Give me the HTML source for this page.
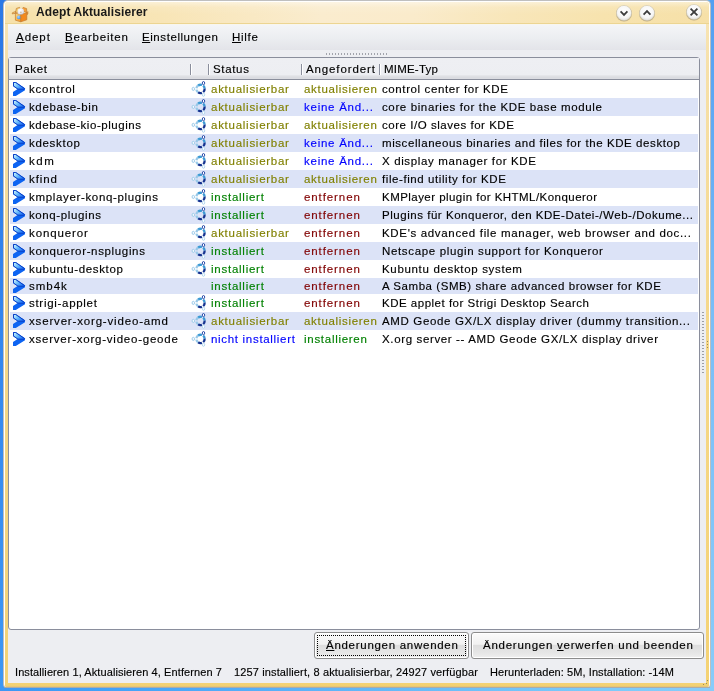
<!DOCTYPE html><html><head><meta charset="utf-8"><style>
*{margin:0;padding:0;box-sizing:border-box}
html,body{width:714px;height:691px;overflow:hidden}
body{position:relative;background:linear-gradient(90deg,#2f7fe8 0%,#4a9cf2 40%,#5eaef7 100%);font-family:"Liberation Sans",sans-serif}
.a{position:absolute}
.t{position:absolute;white-space:pre;font-family:"Liberation Sans",sans-serif;-webkit-font-smoothing:antialiased;will-change:transform;-webkit-text-stroke:0.15px currentColor}
.ic{position:absolute}
u{text-decoration:underline;text-underline-offset:1px}
</style></head><body>

<div class="a" style="left:0;top:0;width:4px;height:691px;background:linear-gradient(180deg,#2b78e6 0%,#3385ee 45%,#3d97f4 100%)"></div>
<div class="a" style="left:710px;top:0;width:4px;height:691px;background:linear-gradient(180deg,#539ff2 0%,#6ab2f6 30%,#7abef8 45%,#88ccfa 100%)"></div>
<div class="a" style="left:0;top:686px;width:714px;height:5px;background:linear-gradient(90deg,#3d97f4 0%,#42a2f8 15%,#5eb4f8 45%,#7ccbfa 85%,#88ccfa 100%)"></div>
<div class="a" style="left:7px;top:0;width:700px;height:1px;background:#cdcdcd"></div>
<div class="a" style="left:3px;top:0px;width:708px;height:688px;border-radius:5px 5px 4px 4px;background:#bfbfbf"></div>
<div class="a" style="left:4px;top:1px;width:706px;height:686px;border-radius:4px 4px 3px 3px;background:#fff"></div>
<div class="a" style="left:5px;top:2px;width:704px;height:685px;border-radius:3px 3px 2px 2px;background:linear-gradient(180deg,#f8e6b8 0%,#f6e0a8 10%,#f5d88a 45%,#f4d274 100%)"></div>
<div class="a" style="left:5px;top:683px;width:704px;height:4px;border-radius:0 0 2px 2px;background:linear-gradient(180deg,#f4d274 0%,#f3d172 60%,#e0c27a 100%)"></div>
<div class="a" style="left:4px;top:687px;width:706px;height:1px;background:#a8a49a;opacity:0.7"></div>
<div class="a" style="left:5px;top:2px;width:704px;height:21px;border-radius:3px 3px 0 0;background:linear-gradient(180deg,rgba(255,255,255,0.45) 0%,rgba(255,255,255,0.1) 25%,rgba(255,255,255,0) 60%),linear-gradient(90deg,#f6e1aa 0%,#f8e5b6 22%,#faecce 45%,#faebcb 58%,#f8e6b9 72%,#f7e3ae 85%,#f6e0a8 100%)"></div>
<div class="a" style="left:5px;top:23px;width:704px;height:1px;background:#ecd592"></div>
<div class="a" style="left:8px;top:24px;width:698px;height:1px;background:#f8f6ee"></div>
<div class="a" style="left:8px;top:25px;width:698px;height:658px;background:#edeef2"></div>
<div class="a" style="left:8px;top:25px;width:698px;height:25px;background:linear-gradient(180deg,#f4f5f7 0%,#eceef1 50%,#e3e4e9 100%)"></div>
<svg class="ic" style="left:11px;top:5px" width="18" height="18" viewBox="0 0 18 18"><defs><linearGradient id="lf" x1="0" y1="0" x2="0.6" y2="1"><stop offset="0" stop-color="#f8dc88"/><stop offset="1" stop-color="#f6a234"/></linearGradient><radialGradient id="sp" cx="40%" cy="35%" r="70%"><stop offset="0" stop-color="#ffffff"/><stop offset="0.7" stop-color="#e6e6ee"/><stop offset="1" stop-color="#b8b8c4"/></radialGradient><radialGradient id="bs" cx="40%" cy="35%" r="70%"><stop offset="0" stop-color="#a8d4ff"/><stop offset="1" stop-color="#3d8ee6"/></radialGradient></defs><g stroke="#c27a30" stroke-width="0.7" stroke-linejoin="round"><path d="M4.4 8.3 L1.2 8.9 L1.6 7.6 L5.2 6.3 Z" fill="#f3d27a"/><path d="M4.4 8.3 L5.4 3.4 L8.6 2.4 L9.6 5.6 Z" fill="#f5d070"/><path d="M10 5 L12.2 2.4 L15.6 3.6 L15.8 7.6 Z" fill="#f6a03a"/><path d="M15.8 7.6 L16.8 6.6 L16.9 8.9 L15.8 9.8 Z" fill="#f0a040"/><path d="M4.4 8.3 L9.8 9.4 L9.8 16.8 L4.4 15.2 Z" fill="url(#lf)"/><path d="M9.8 9.4 L15.8 7.6 L15.8 14.8 L9.8 16.8 Z" fill="#f38a1e"/></g><circle cx="9.8" cy="6.4" r="3.2" fill="url(#sp)"/><circle cx="9.9" cy="7.4" r="0.8" fill="#c8b8a0"/><circle cx="7.7" cy="12.4" r="1.8" fill="url(#bs)"/></svg>
<div class="t" style="left:36px;top:5px;line-height:15px;font-size:12px;font-weight:bold;color:#1a1a1a;letter-spacing:0.1px;-webkit-text-stroke:0">Adept Aktualisierer</div>
<svg class="ic" style="left:614.5px;top:3.5999999999999996px" width="18" height="18" viewBox="0 0 18 18"><defs><radialGradient id="g623" cx="50%" cy="40%" r="60%"><stop offset="0" stop-color="#ffffff"/><stop offset="0.7" stop-color="#f6f6f6"/><stop offset="1" stop-color="#dedcd6"/></radialGradient></defs><circle cx="9" cy="9.7" r="7.9" fill="#8a7a58" opacity="0.5"/><circle cx="9" cy="9" r="7.6" fill="url(#g623)" stroke="#cbc4b0" stroke-width="0.5"/><path d="M5.6 7.4 L9 10.9 L12.4 7.4" stroke="#3c3c3c" stroke-width="1.8" fill="none"/></svg>
<svg class="ic" style="left:637.5px;top:3.5999999999999996px" width="18" height="18" viewBox="0 0 18 18"><defs><radialGradient id="g646" cx="50%" cy="40%" r="60%"><stop offset="0" stop-color="#ffffff"/><stop offset="0.7" stop-color="#f6f6f6"/><stop offset="1" stop-color="#dedcd6"/></radialGradient></defs><circle cx="9" cy="9.7" r="7.9" fill="#8a7a58" opacity="0.5"/><circle cx="9" cy="9" r="7.6" fill="url(#g646)" stroke="#cbc4b0" stroke-width="0.5"/><path d="M5.6 10.6 L9 7.1 L12.4 10.6" stroke="#3c3c3c" stroke-width="1.8" fill="none"/></svg>
<svg class="ic" style="left:684.5px;top:3.3000000000000007px" width="18" height="18" viewBox="0 0 18 18"><defs><radialGradient id="g693" cx="50%" cy="40%" r="60%"><stop offset="0" stop-color="#ffffff"/><stop offset="0.7" stop-color="#f6f6f6"/><stop offset="1" stop-color="#dedcd6"/></radialGradient></defs><circle cx="9" cy="9.7" r="7.9" fill="#8a7a58" opacity="0.5"/><circle cx="9" cy="9" r="7.6" fill="url(#g693)" stroke="#cbc4b0" stroke-width="0.5"/><path d="M5.6 5.6 L12.4 12.4 M12.4 5.6 L5.6 12.4" stroke="#3c3c3c" stroke-width="1.8" fill="none"/></svg>
<div class="t" style="left:16px;top:28.52px;line-height:17px;font-size:11.5px;letter-spacing:0.956px;color:#000;"><u>A</u>dept</div>
<div class="t" style="left:65px;top:28.52px;line-height:17px;font-size:11.5px;letter-spacing:0.804px;color:#000;"><u>B</u>earbeiten</div>
<div class="t" style="left:142px;top:28.52px;line-height:17px;font-size:11.5px;letter-spacing:0.567px;color:#000;"><u>E</u>instellungen</div>
<div class="t" style="left:232px;top:28.52px;line-height:17px;font-size:11.5px;letter-spacing:0.712px;color:#000;"><u>H</u>ilfe</div>
<div class="a" style="left:326px;top:53px;width:62px;height:2px;background:repeating-linear-gradient(90deg,#a2a4ac 0 1px,transparent 1px 3px)"></div>
<div class="a" style="left:8px;top:57px;width:692px;height:573px;border:1px solid #8a8e9c;border-radius:3px;background:#fff"></div>
<div class="a" style="left:9px;top:58px;width:690px;height:21px;background:linear-gradient(180deg,#eeeff3 0%,#edeef2 80.9%,#e5e6ea 81%,#e5e6ea 85.7%,#dfe0e4 85.8%,#dfe0e4 90.4%,#dbdce1 90.5%,#dbdce1 100%)"></div>
<div class="a" style="left:9px;top:79px;width:690px;height:1px;background:#8a8e9c"></div>
<div class="a" style="left:190px;top:64px;width:1px;height:11px;background:#8a8e9c"></div>
<div class="a" style="left:191px;top:64px;width:1px;height:11px;background:#fff"></div>
<div class="a" style="left:208px;top:64px;width:1px;height:11px;background:#8a8e9c"></div>
<div class="a" style="left:209px;top:64px;width:1px;height:11px;background:#fff"></div>
<div class="a" style="left:301px;top:64px;width:1px;height:11px;background:#8a8e9c"></div>
<div class="a" style="left:302px;top:64px;width:1px;height:11px;background:#fff"></div>
<div class="a" style="left:379px;top:64px;width:1px;height:11px;background:#8a8e9c"></div>
<div class="a" style="left:380px;top:64px;width:1px;height:11px;background:#fff"></div>
<div class="t" style="left:15px;top:60.52px;line-height:17px;font-size:11.5px;letter-spacing:0.617px;color:#000;">Paket</div>
<div class="t" style="left:213px;top:60.52px;line-height:17px;font-size:11.5px;letter-spacing:0.660px;color:#000;">Status</div>
<div class="t" style="left:306px;top:60.52px;line-height:17px;font-size:11.5px;letter-spacing:0.879px;color:#000;">Angefordert</div>
<div class="t" style="left:384px;top:60.52px;line-height:17px;font-size:11.5px;letter-spacing:0.210px;color:#000;">MIME-Typ</div>
<svg class="ic" style="left:13px;top:82px" width="13" height="15" viewBox="0 0 13 15"><defs><linearGradient id="ag" x1="0" y1="0" x2="1" y2="0.6"><stop offset="0" stop-color="#d6fdff"/><stop offset="0.55" stop-color="#5fb4fb"/><stop offset="1" stop-color="#1c6ff4"/></linearGradient></defs><path d="M0 0 L2.8 0 L12 6.3 L12 8.2 L2.8 14 L0 14 L0 10 L4.6 7.1 L0 4.2 Z" fill="#0d64f2"/><path d="M0.5 0.5 L2.7 0.5 L11.6 6.6 L11 7.3 L4.9 7.1 L0.5 4.0 Z" fill="url(#ag)" stroke="#0b3ec4" stroke-width="1" stroke-linejoin="miter"/></svg>
<svg class="ic" style="left:191px;top:81px" width="16" height="16" viewBox="0 0 16 16"><path d="M5.41 7.18 A4.15 4.15 0 0 1 7.12 4.50" stroke="#98c8e8" stroke-width="2.3" fill="none"/><path d="M7.12 4.50 A4.15 4.15 0 0 1 11.05 4.05" stroke="#3c9ad4" stroke-width="2.3" fill="none"/><path d="M12.17 4.72 A4.15 4.15 0 0 1 13.63 7.54" stroke="#3c9ad4" stroke-width="2.3" fill="none"/><path d="M13.63 7.54 A4.15 4.15 0 0 1 12.17 11.08" stroke="#15328f" stroke-width="2.3" fill="none"/><path d="M10.92 11.80 A4.15 4.15 0 0 1 7.12 11.30" stroke="#15328f" stroke-width="2.3" fill="none"/><path d="M7.12 11.30 A4.15 4.15 0 0 1 5.41 8.62" stroke="#98c8e8" stroke-width="2.3" fill="none"/><ellipse cx="12.5" cy="2.1" rx="1.2" ry="1.6" fill="#ffffff" stroke="#2a4aa8" stroke-width="1.0"/><ellipse cx="2.3" cy="7.9" rx="1.2" ry="1.6" fill="#ffffff" stroke="#9ccbea" stroke-width="1.0"/><ellipse cx="12.5" cy="13.7" rx="1.2" ry="1.6" fill="#ffffff" stroke="#b2d6ee" stroke-width="1.0"/></svg>
<div class="t" style="left:29px;top:80.52px;line-height:17px;font-size:11.5px;letter-spacing:0.809px;color:#000;">kcontrol</div>
<div class="t" style="left:211px;top:80.52px;line-height:17px;font-size:11.5px;letter-spacing:0.734px;color:#808000;">aktualisierbar</div>
<div class="t" style="left:304px;top:80.52px;line-height:17px;font-size:11.5px;letter-spacing:0.691px;color:#808000;">aktualisieren</div>
<div class="t" style="left:382px;top:80.52px;line-height:17px;font-size:11.5px;letter-spacing:0.607px;color:#000;">control center for KDE</div>
<div class="a" style="left:10px;top:98px;width:688px;height:18px;background:#dce3f7"></div>
<svg class="ic" style="left:13px;top:100px" width="13" height="15" viewBox="0 0 13 15"><defs><linearGradient id="ag" x1="0" y1="0" x2="1" y2="0.6"><stop offset="0" stop-color="#d6fdff"/><stop offset="0.55" stop-color="#5fb4fb"/><stop offset="1" stop-color="#1c6ff4"/></linearGradient></defs><path d="M0 0 L2.8 0 L12 6.3 L12 8.2 L2.8 14 L0 14 L0 10 L4.6 7.1 L0 4.2 Z" fill="#0d64f2"/><path d="M0.5 0.5 L2.7 0.5 L11.6 6.6 L11 7.3 L4.9 7.1 L0.5 4.0 Z" fill="url(#ag)" stroke="#0b3ec4" stroke-width="1" stroke-linejoin="miter"/></svg>
<svg class="ic" style="left:191px;top:99px" width="16" height="16" viewBox="0 0 16 16"><path d="M5.41 7.18 A4.15 4.15 0 0 1 7.12 4.50" stroke="#98c8e8" stroke-width="2.3" fill="none"/><path d="M7.12 4.50 A4.15 4.15 0 0 1 11.05 4.05" stroke="#3c9ad4" stroke-width="2.3" fill="none"/><path d="M12.17 4.72 A4.15 4.15 0 0 1 13.63 7.54" stroke="#3c9ad4" stroke-width="2.3" fill="none"/><path d="M13.63 7.54 A4.15 4.15 0 0 1 12.17 11.08" stroke="#15328f" stroke-width="2.3" fill="none"/><path d="M10.92 11.80 A4.15 4.15 0 0 1 7.12 11.30" stroke="#15328f" stroke-width="2.3" fill="none"/><path d="M7.12 11.30 A4.15 4.15 0 0 1 5.41 8.62" stroke="#98c8e8" stroke-width="2.3" fill="none"/><ellipse cx="12.5" cy="2.1" rx="1.2" ry="1.6" fill="#ffffff" stroke="#2a4aa8" stroke-width="1.0"/><ellipse cx="2.3" cy="7.9" rx="1.2" ry="1.6" fill="#ffffff" stroke="#9ccbea" stroke-width="1.0"/><ellipse cx="12.5" cy="13.7" rx="1.2" ry="1.6" fill="#ffffff" stroke="#b2d6ee" stroke-width="1.0"/></svg>
<div class="t" style="left:29px;top:98.52px;line-height:17px;font-size:11.5px;letter-spacing:0.621px;color:#000;">kdebase-bin</div>
<div class="t" style="left:211px;top:98.52px;line-height:17px;font-size:11.5px;letter-spacing:0.734px;color:#808000;">aktualisierbar</div>
<div class="t" style="left:304px;top:98.52px;line-height:17px;font-size:11.5px;letter-spacing:0.740px;color:#0000ff;">keine Änd...</div>
<div class="t" style="left:382px;top:98.52px;line-height:17px;font-size:11.5px;letter-spacing:0.621px;color:#000;">core binaries for the KDE base module</div>
<svg class="ic" style="left:13px;top:118px" width="13" height="15" viewBox="0 0 13 15"><defs><linearGradient id="ag" x1="0" y1="0" x2="1" y2="0.6"><stop offset="0" stop-color="#d6fdff"/><stop offset="0.55" stop-color="#5fb4fb"/><stop offset="1" stop-color="#1c6ff4"/></linearGradient></defs><path d="M0 0 L2.8 0 L12 6.3 L12 8.2 L2.8 14 L0 14 L0 10 L4.6 7.1 L0 4.2 Z" fill="#0d64f2"/><path d="M0.5 0.5 L2.7 0.5 L11.6 6.6 L11 7.3 L4.9 7.1 L0.5 4.0 Z" fill="url(#ag)" stroke="#0b3ec4" stroke-width="1" stroke-linejoin="miter"/></svg>
<svg class="ic" style="left:191px;top:117px" width="16" height="16" viewBox="0 0 16 16"><path d="M5.41 7.18 A4.15 4.15 0 0 1 7.12 4.50" stroke="#98c8e8" stroke-width="2.3" fill="none"/><path d="M7.12 4.50 A4.15 4.15 0 0 1 11.05 4.05" stroke="#3c9ad4" stroke-width="2.3" fill="none"/><path d="M12.17 4.72 A4.15 4.15 0 0 1 13.63 7.54" stroke="#3c9ad4" stroke-width="2.3" fill="none"/><path d="M13.63 7.54 A4.15 4.15 0 0 1 12.17 11.08" stroke="#15328f" stroke-width="2.3" fill="none"/><path d="M10.92 11.80 A4.15 4.15 0 0 1 7.12 11.30" stroke="#15328f" stroke-width="2.3" fill="none"/><path d="M7.12 11.30 A4.15 4.15 0 0 1 5.41 8.62" stroke="#98c8e8" stroke-width="2.3" fill="none"/><ellipse cx="12.5" cy="2.1" rx="1.2" ry="1.6" fill="#ffffff" stroke="#2a4aa8" stroke-width="1.0"/><ellipse cx="2.3" cy="7.9" rx="1.2" ry="1.6" fill="#ffffff" stroke="#9ccbea" stroke-width="1.0"/><ellipse cx="12.5" cy="13.7" rx="1.2" ry="1.6" fill="#ffffff" stroke="#b2d6ee" stroke-width="1.0"/></svg>
<div class="t" style="left:29px;top:116.52px;line-height:17px;font-size:11.5px;letter-spacing:0.535px;color:#000;">kdebase-kio-plugins</div>
<div class="t" style="left:211px;top:116.52px;line-height:17px;font-size:11.5px;letter-spacing:0.734px;color:#808000;">aktualisierbar</div>
<div class="t" style="left:304px;top:116.52px;line-height:17px;font-size:11.5px;letter-spacing:0.691px;color:#808000;">aktualisieren</div>
<div class="t" style="left:382px;top:116.52px;line-height:17px;font-size:11.5px;letter-spacing:0.533px;color:#000;">core I/O slaves for KDE</div>
<div class="a" style="left:10px;top:134px;width:688px;height:18px;background:#dce3f7"></div>
<svg class="ic" style="left:13px;top:136px" width="13" height="15" viewBox="0 0 13 15"><defs><linearGradient id="ag" x1="0" y1="0" x2="1" y2="0.6"><stop offset="0" stop-color="#d6fdff"/><stop offset="0.55" stop-color="#5fb4fb"/><stop offset="1" stop-color="#1c6ff4"/></linearGradient></defs><path d="M0 0 L2.8 0 L12 6.3 L12 8.2 L2.8 14 L0 14 L0 10 L4.6 7.1 L0 4.2 Z" fill="#0d64f2"/><path d="M0.5 0.5 L2.7 0.5 L11.6 6.6 L11 7.3 L4.9 7.1 L0.5 4.0 Z" fill="url(#ag)" stroke="#0b3ec4" stroke-width="1" stroke-linejoin="miter"/></svg>
<svg class="ic" style="left:191px;top:135px" width="16" height="16" viewBox="0 0 16 16"><path d="M5.41 7.18 A4.15 4.15 0 0 1 7.12 4.50" stroke="#98c8e8" stroke-width="2.3" fill="none"/><path d="M7.12 4.50 A4.15 4.15 0 0 1 11.05 4.05" stroke="#3c9ad4" stroke-width="2.3" fill="none"/><path d="M12.17 4.72 A4.15 4.15 0 0 1 13.63 7.54" stroke="#3c9ad4" stroke-width="2.3" fill="none"/><path d="M13.63 7.54 A4.15 4.15 0 0 1 12.17 11.08" stroke="#15328f" stroke-width="2.3" fill="none"/><path d="M10.92 11.80 A4.15 4.15 0 0 1 7.12 11.30" stroke="#15328f" stroke-width="2.3" fill="none"/><path d="M7.12 11.30 A4.15 4.15 0 0 1 5.41 8.62" stroke="#98c8e8" stroke-width="2.3" fill="none"/><ellipse cx="12.5" cy="2.1" rx="1.2" ry="1.6" fill="#ffffff" stroke="#2a4aa8" stroke-width="1.0"/><ellipse cx="2.3" cy="7.9" rx="1.2" ry="1.6" fill="#ffffff" stroke="#9ccbea" stroke-width="1.0"/><ellipse cx="12.5" cy="13.7" rx="1.2" ry="1.6" fill="#ffffff" stroke="#b2d6ee" stroke-width="1.0"/></svg>
<div class="t" style="left:29px;top:134.52px;line-height:17px;font-size:11.5px;letter-spacing:0.690px;color:#000;">kdesktop</div>
<div class="t" style="left:211px;top:134.52px;line-height:17px;font-size:11.5px;letter-spacing:0.734px;color:#808000;">aktualisierbar</div>
<div class="t" style="left:304px;top:134.52px;line-height:17px;font-size:11.5px;letter-spacing:0.740px;color:#0000ff;">keine Änd...</div>
<div class="t" style="left:382px;top:134.52px;line-height:17px;font-size:11.5px;letter-spacing:0.576px;color:#000;">miscellaneous binaries and files for the KDE desktop</div>
<svg class="ic" style="left:13px;top:154px" width="13" height="15" viewBox="0 0 13 15"><defs><linearGradient id="ag" x1="0" y1="0" x2="1" y2="0.6"><stop offset="0" stop-color="#d6fdff"/><stop offset="0.55" stop-color="#5fb4fb"/><stop offset="1" stop-color="#1c6ff4"/></linearGradient></defs><path d="M0 0 L2.8 0 L12 6.3 L12 8.2 L2.8 14 L0 14 L0 10 L4.6 7.1 L0 4.2 Z" fill="#0d64f2"/><path d="M0.5 0.5 L2.7 0.5 L11.6 6.6 L11 7.3 L4.9 7.1 L0.5 4.0 Z" fill="url(#ag)" stroke="#0b3ec4" stroke-width="1" stroke-linejoin="miter"/></svg>
<svg class="ic" style="left:191px;top:153px" width="16" height="16" viewBox="0 0 16 16"><path d="M5.41 7.18 A4.15 4.15 0 0 1 7.12 4.50" stroke="#98c8e8" stroke-width="2.3" fill="none"/><path d="M7.12 4.50 A4.15 4.15 0 0 1 11.05 4.05" stroke="#3c9ad4" stroke-width="2.3" fill="none"/><path d="M12.17 4.72 A4.15 4.15 0 0 1 13.63 7.54" stroke="#3c9ad4" stroke-width="2.3" fill="none"/><path d="M13.63 7.54 A4.15 4.15 0 0 1 12.17 11.08" stroke="#15328f" stroke-width="2.3" fill="none"/><path d="M10.92 11.80 A4.15 4.15 0 0 1 7.12 11.30" stroke="#15328f" stroke-width="2.3" fill="none"/><path d="M7.12 11.30 A4.15 4.15 0 0 1 5.41 8.62" stroke="#98c8e8" stroke-width="2.3" fill="none"/><ellipse cx="12.5" cy="2.1" rx="1.2" ry="1.6" fill="#ffffff" stroke="#2a4aa8" stroke-width="1.0"/><ellipse cx="2.3" cy="7.9" rx="1.2" ry="1.6" fill="#ffffff" stroke="#9ccbea" stroke-width="1.0"/><ellipse cx="12.5" cy="13.7" rx="1.2" ry="1.6" fill="#ffffff" stroke="#b2d6ee" stroke-width="1.0"/></svg>
<div class="t" style="left:29px;top:152.52px;line-height:17px;font-size:11.5px;letter-spacing:1.605px;color:#000;">kdm</div>
<div class="t" style="left:211px;top:152.52px;line-height:17px;font-size:11.5px;letter-spacing:0.734px;color:#808000;">aktualisierbar</div>
<div class="t" style="left:304px;top:152.52px;line-height:17px;font-size:11.5px;letter-spacing:0.740px;color:#0000ff;">keine Änd...</div>
<div class="t" style="left:382px;top:152.52px;line-height:17px;font-size:11.5px;letter-spacing:0.632px;color:#000;">X display manager for KDE</div>
<div class="a" style="left:10px;top:170px;width:688px;height:18px;background:#dce3f7"></div>
<svg class="ic" style="left:13px;top:172px" width="13" height="15" viewBox="0 0 13 15"><defs><linearGradient id="ag" x1="0" y1="0" x2="1" y2="0.6"><stop offset="0" stop-color="#d6fdff"/><stop offset="0.55" stop-color="#5fb4fb"/><stop offset="1" stop-color="#1c6ff4"/></linearGradient></defs><path d="M0 0 L2.8 0 L12 6.3 L12 8.2 L2.8 14 L0 14 L0 10 L4.6 7.1 L0 4.2 Z" fill="#0d64f2"/><path d="M0.5 0.5 L2.7 0.5 L11.6 6.6 L11 7.3 L4.9 7.1 L0.5 4.0 Z" fill="url(#ag)" stroke="#0b3ec4" stroke-width="1" stroke-linejoin="miter"/></svg>
<svg class="ic" style="left:191px;top:171px" width="16" height="16" viewBox="0 0 16 16"><path d="M5.41 7.18 A4.15 4.15 0 0 1 7.12 4.50" stroke="#98c8e8" stroke-width="2.3" fill="none"/><path d="M7.12 4.50 A4.15 4.15 0 0 1 11.05 4.05" stroke="#3c9ad4" stroke-width="2.3" fill="none"/><path d="M12.17 4.72 A4.15 4.15 0 0 1 13.63 7.54" stroke="#3c9ad4" stroke-width="2.3" fill="none"/><path d="M13.63 7.54 A4.15 4.15 0 0 1 12.17 11.08" stroke="#15328f" stroke-width="2.3" fill="none"/><path d="M10.92 11.80 A4.15 4.15 0 0 1 7.12 11.30" stroke="#15328f" stroke-width="2.3" fill="none"/><path d="M7.12 11.30 A4.15 4.15 0 0 1 5.41 8.62" stroke="#98c8e8" stroke-width="2.3" fill="none"/><ellipse cx="12.5" cy="2.1" rx="1.2" ry="1.6" fill="#ffffff" stroke="#2a4aa8" stroke-width="1.0"/><ellipse cx="2.3" cy="7.9" rx="1.2" ry="1.6" fill="#ffffff" stroke="#9ccbea" stroke-width="1.0"/><ellipse cx="12.5" cy="13.7" rx="1.2" ry="1.6" fill="#ffffff" stroke="#b2d6ee" stroke-width="1.0"/></svg>
<div class="t" style="left:29px;top:170.52px;line-height:17px;font-size:11.5px;letter-spacing:0.891px;color:#000;">kfind</div>
<div class="t" style="left:211px;top:170.52px;line-height:17px;font-size:11.5px;letter-spacing:0.734px;color:#808000;">aktualisierbar</div>
<div class="t" style="left:304px;top:170.52px;line-height:17px;font-size:11.5px;letter-spacing:0.691px;color:#808000;">aktualisieren</div>
<div class="t" style="left:382px;top:170.52px;line-height:17px;font-size:11.5px;letter-spacing:0.581px;color:#000;">file-find utility for KDE</div>
<svg class="ic" style="left:13px;top:190px" width="13" height="15" viewBox="0 0 13 15"><defs><linearGradient id="ag" x1="0" y1="0" x2="1" y2="0.6"><stop offset="0" stop-color="#d6fdff"/><stop offset="0.55" stop-color="#5fb4fb"/><stop offset="1" stop-color="#1c6ff4"/></linearGradient></defs><path d="M0 0 L2.8 0 L12 6.3 L12 8.2 L2.8 14 L0 14 L0 10 L4.6 7.1 L0 4.2 Z" fill="#0d64f2"/><path d="M0.5 0.5 L2.7 0.5 L11.6 6.6 L11 7.3 L4.9 7.1 L0.5 4.0 Z" fill="url(#ag)" stroke="#0b3ec4" stroke-width="1" stroke-linejoin="miter"/></svg>
<svg class="ic" style="left:191px;top:189px" width="16" height="16" viewBox="0 0 16 16"><path d="M5.41 7.18 A4.15 4.15 0 0 1 7.12 4.50" stroke="#98c8e8" stroke-width="2.3" fill="none"/><path d="M7.12 4.50 A4.15 4.15 0 0 1 11.05 4.05" stroke="#3c9ad4" stroke-width="2.3" fill="none"/><path d="M12.17 4.72 A4.15 4.15 0 0 1 13.63 7.54" stroke="#3c9ad4" stroke-width="2.3" fill="none"/><path d="M13.63 7.54 A4.15 4.15 0 0 1 12.17 11.08" stroke="#15328f" stroke-width="2.3" fill="none"/><path d="M10.92 11.80 A4.15 4.15 0 0 1 7.12 11.30" stroke="#15328f" stroke-width="2.3" fill="none"/><path d="M7.12 11.30 A4.15 4.15 0 0 1 5.41 8.62" stroke="#98c8e8" stroke-width="2.3" fill="none"/><ellipse cx="12.5" cy="2.1" rx="1.2" ry="1.6" fill="#ffffff" stroke="#2a4aa8" stroke-width="1.0"/><ellipse cx="2.3" cy="7.9" rx="1.2" ry="1.6" fill="#ffffff" stroke="#9ccbea" stroke-width="1.0"/><ellipse cx="12.5" cy="13.7" rx="1.2" ry="1.6" fill="#ffffff" stroke="#b2d6ee" stroke-width="1.0"/></svg>
<div class="t" style="left:29px;top:188.52px;line-height:17px;font-size:11.5px;letter-spacing:0.661px;color:#000;">kmplayer-konq-plugins</div>
<div class="t" style="left:211px;top:188.52px;line-height:17px;font-size:11.5px;letter-spacing:0.750px;color:#008000;">installiert</div>
<div class="t" style="left:304px;top:188.52px;line-height:17px;font-size:11.5px;letter-spacing:0.908px;color:#800000;">entfernen</div>
<div class="t" style="left:382px;top:188.52px;line-height:17px;font-size:11.5px;letter-spacing:0.457px;color:#000;">KMPlayer plugin for KHTML/Konqueror</div>
<div class="a" style="left:10px;top:206px;width:688px;height:18px;background:#dce3f7"></div>
<svg class="ic" style="left:13px;top:208px" width="13" height="15" viewBox="0 0 13 15"><defs><linearGradient id="ag" x1="0" y1="0" x2="1" y2="0.6"><stop offset="0" stop-color="#d6fdff"/><stop offset="0.55" stop-color="#5fb4fb"/><stop offset="1" stop-color="#1c6ff4"/></linearGradient></defs><path d="M0 0 L2.8 0 L12 6.3 L12 8.2 L2.8 14 L0 14 L0 10 L4.6 7.1 L0 4.2 Z" fill="#0d64f2"/><path d="M0.5 0.5 L2.7 0.5 L11.6 6.6 L11 7.3 L4.9 7.1 L0.5 4.0 Z" fill="url(#ag)" stroke="#0b3ec4" stroke-width="1" stroke-linejoin="miter"/></svg>
<svg class="ic" style="left:191px;top:207px" width="16" height="16" viewBox="0 0 16 16"><path d="M5.41 7.18 A4.15 4.15 0 0 1 7.12 4.50" stroke="#98c8e8" stroke-width="2.3" fill="none"/><path d="M7.12 4.50 A4.15 4.15 0 0 1 11.05 4.05" stroke="#3c9ad4" stroke-width="2.3" fill="none"/><path d="M12.17 4.72 A4.15 4.15 0 0 1 13.63 7.54" stroke="#3c9ad4" stroke-width="2.3" fill="none"/><path d="M13.63 7.54 A4.15 4.15 0 0 1 12.17 11.08" stroke="#15328f" stroke-width="2.3" fill="none"/><path d="M10.92 11.80 A4.15 4.15 0 0 1 7.12 11.30" stroke="#15328f" stroke-width="2.3" fill="none"/><path d="M7.12 11.30 A4.15 4.15 0 0 1 5.41 8.62" stroke="#98c8e8" stroke-width="2.3" fill="none"/><ellipse cx="12.5" cy="2.1" rx="1.2" ry="1.6" fill="#ffffff" stroke="#2a4aa8" stroke-width="1.0"/><ellipse cx="2.3" cy="7.9" rx="1.2" ry="1.6" fill="#ffffff" stroke="#9ccbea" stroke-width="1.0"/><ellipse cx="12.5" cy="13.7" rx="1.2" ry="1.6" fill="#ffffff" stroke="#b2d6ee" stroke-width="1.0"/></svg>
<div class="t" style="left:29px;top:206.52px;line-height:17px;font-size:11.5px;letter-spacing:0.609px;color:#000;">konq-plugins</div>
<div class="t" style="left:211px;top:206.52px;line-height:17px;font-size:11.5px;letter-spacing:0.750px;color:#008000;">installiert</div>
<div class="t" style="left:304px;top:206.52px;line-height:17px;font-size:11.5px;letter-spacing:0.908px;color:#800000;">entfernen</div>
<div class="t" style="left:382px;top:206.52px;line-height:17px;font-size:11.5px;letter-spacing:0.535px;color:#000;">Plugins für Konqueror, den KDE-Datei-/Web-/Dokume...</div>
<svg class="ic" style="left:13px;top:226px" width="13" height="15" viewBox="0 0 13 15"><defs><linearGradient id="ag" x1="0" y1="0" x2="1" y2="0.6"><stop offset="0" stop-color="#d6fdff"/><stop offset="0.55" stop-color="#5fb4fb"/><stop offset="1" stop-color="#1c6ff4"/></linearGradient></defs><path d="M0 0 L2.8 0 L12 6.3 L12 8.2 L2.8 14 L0 14 L0 10 L4.6 7.1 L0 4.2 Z" fill="#0d64f2"/><path d="M0.5 0.5 L2.7 0.5 L11.6 6.6 L11 7.3 L4.9 7.1 L0.5 4.0 Z" fill="url(#ag)" stroke="#0b3ec4" stroke-width="1" stroke-linejoin="miter"/></svg>
<svg class="ic" style="left:191px;top:225px" width="16" height="16" viewBox="0 0 16 16"><path d="M5.41 7.18 A4.15 4.15 0 0 1 7.12 4.50" stroke="#98c8e8" stroke-width="2.3" fill="none"/><path d="M7.12 4.50 A4.15 4.15 0 0 1 11.05 4.05" stroke="#3c9ad4" stroke-width="2.3" fill="none"/><path d="M12.17 4.72 A4.15 4.15 0 0 1 13.63 7.54" stroke="#3c9ad4" stroke-width="2.3" fill="none"/><path d="M13.63 7.54 A4.15 4.15 0 0 1 12.17 11.08" stroke="#15328f" stroke-width="2.3" fill="none"/><path d="M10.92 11.80 A4.15 4.15 0 0 1 7.12 11.30" stroke="#15328f" stroke-width="2.3" fill="none"/><path d="M7.12 11.30 A4.15 4.15 0 0 1 5.41 8.62" stroke="#98c8e8" stroke-width="2.3" fill="none"/><ellipse cx="12.5" cy="2.1" rx="1.2" ry="1.6" fill="#ffffff" stroke="#2a4aa8" stroke-width="1.0"/><ellipse cx="2.3" cy="7.9" rx="1.2" ry="1.6" fill="#ffffff" stroke="#9ccbea" stroke-width="1.0"/><ellipse cx="12.5" cy="13.7" rx="1.2" ry="1.6" fill="#ffffff" stroke="#b2d6ee" stroke-width="1.0"/></svg>
<div class="t" style="left:29px;top:224.52px;line-height:17px;font-size:11.5px;letter-spacing:0.894px;color:#000;">konqueror</div>
<div class="t" style="left:211px;top:224.52px;line-height:17px;font-size:11.5px;letter-spacing:0.734px;color:#808000;">aktualisierbar</div>
<div class="t" style="left:304px;top:224.52px;line-height:17px;font-size:11.5px;letter-spacing:0.908px;color:#800000;">entfernen</div>
<div class="t" style="left:382px;top:224.52px;line-height:17px;font-size:11.5px;letter-spacing:0.662px;color:#000;">KDE&#x27;s advanced file manager, web browser and doc...</div>
<div class="a" style="left:10px;top:242px;width:688px;height:18px;background:#dce3f7"></div>
<svg class="ic" style="left:13px;top:244px" width="13" height="15" viewBox="0 0 13 15"><defs><linearGradient id="ag" x1="0" y1="0" x2="1" y2="0.6"><stop offset="0" stop-color="#d6fdff"/><stop offset="0.55" stop-color="#5fb4fb"/><stop offset="1" stop-color="#1c6ff4"/></linearGradient></defs><path d="M0 0 L2.8 0 L12 6.3 L12 8.2 L2.8 14 L0 14 L0 10 L4.6 7.1 L0 4.2 Z" fill="#0d64f2"/><path d="M0.5 0.5 L2.7 0.5 L11.6 6.6 L11 7.3 L4.9 7.1 L0.5 4.0 Z" fill="url(#ag)" stroke="#0b3ec4" stroke-width="1" stroke-linejoin="miter"/></svg>
<svg class="ic" style="left:191px;top:243px" width="16" height="16" viewBox="0 0 16 16"><path d="M5.41 7.18 A4.15 4.15 0 0 1 7.12 4.50" stroke="#98c8e8" stroke-width="2.3" fill="none"/><path d="M7.12 4.50 A4.15 4.15 0 0 1 11.05 4.05" stroke="#3c9ad4" stroke-width="2.3" fill="none"/><path d="M12.17 4.72 A4.15 4.15 0 0 1 13.63 7.54" stroke="#3c9ad4" stroke-width="2.3" fill="none"/><path d="M13.63 7.54 A4.15 4.15 0 0 1 12.17 11.08" stroke="#15328f" stroke-width="2.3" fill="none"/><path d="M10.92 11.80 A4.15 4.15 0 0 1 7.12 11.30" stroke="#15328f" stroke-width="2.3" fill="none"/><path d="M7.12 11.30 A4.15 4.15 0 0 1 5.41 8.62" stroke="#98c8e8" stroke-width="2.3" fill="none"/><ellipse cx="12.5" cy="2.1" rx="1.2" ry="1.6" fill="#ffffff" stroke="#2a4aa8" stroke-width="1.0"/><ellipse cx="2.3" cy="7.9" rx="1.2" ry="1.6" fill="#ffffff" stroke="#9ccbea" stroke-width="1.0"/><ellipse cx="12.5" cy="13.7" rx="1.2" ry="1.6" fill="#ffffff" stroke="#b2d6ee" stroke-width="1.0"/></svg>
<div class="t" style="left:29px;top:242.52px;line-height:17px;font-size:11.5px;letter-spacing:0.650px;color:#000;">konqueror-nsplugins</div>
<div class="t" style="left:211px;top:242.52px;line-height:17px;font-size:11.5px;letter-spacing:0.750px;color:#008000;">installiert</div>
<div class="t" style="left:304px;top:242.52px;line-height:17px;font-size:11.5px;letter-spacing:0.908px;color:#800000;">entfernen</div>
<div class="t" style="left:382px;top:242.52px;line-height:17px;font-size:11.5px;letter-spacing:0.650px;color:#000;">Netscape plugin support for Konqueror</div>
<svg class="ic" style="left:13px;top:262px" width="13" height="15" viewBox="0 0 13 15"><defs><linearGradient id="ag" x1="0" y1="0" x2="1" y2="0.6"><stop offset="0" stop-color="#d6fdff"/><stop offset="0.55" stop-color="#5fb4fb"/><stop offset="1" stop-color="#1c6ff4"/></linearGradient></defs><path d="M0 0 L2.8 0 L12 6.3 L12 8.2 L2.8 14 L0 14 L0 10 L4.6 7.1 L0 4.2 Z" fill="#0d64f2"/><path d="M0.5 0.5 L2.7 0.5 L11.6 6.6 L11 7.3 L4.9 7.1 L0.5 4.0 Z" fill="url(#ag)" stroke="#0b3ec4" stroke-width="1" stroke-linejoin="miter"/></svg>
<svg class="ic" style="left:191px;top:261px" width="16" height="16" viewBox="0 0 16 16"><path d="M5.41 7.18 A4.15 4.15 0 0 1 7.12 4.50" stroke="#98c8e8" stroke-width="2.3" fill="none"/><path d="M7.12 4.50 A4.15 4.15 0 0 1 11.05 4.05" stroke="#3c9ad4" stroke-width="2.3" fill="none"/><path d="M12.17 4.72 A4.15 4.15 0 0 1 13.63 7.54" stroke="#3c9ad4" stroke-width="2.3" fill="none"/><path d="M13.63 7.54 A4.15 4.15 0 0 1 12.17 11.08" stroke="#15328f" stroke-width="2.3" fill="none"/><path d="M10.92 11.80 A4.15 4.15 0 0 1 7.12 11.30" stroke="#15328f" stroke-width="2.3" fill="none"/><path d="M7.12 11.30 A4.15 4.15 0 0 1 5.41 8.62" stroke="#98c8e8" stroke-width="2.3" fill="none"/><ellipse cx="12.5" cy="2.1" rx="1.2" ry="1.6" fill="#ffffff" stroke="#2a4aa8" stroke-width="1.0"/><ellipse cx="2.3" cy="7.9" rx="1.2" ry="1.6" fill="#ffffff" stroke="#9ccbea" stroke-width="1.0"/><ellipse cx="12.5" cy="13.7" rx="1.2" ry="1.6" fill="#ffffff" stroke="#b2d6ee" stroke-width="1.0"/></svg>
<div class="t" style="left:29px;top:260.52px;line-height:17px;font-size:11.5px;letter-spacing:0.631px;color:#000;">kubuntu-desktop</div>
<div class="t" style="left:211px;top:260.52px;line-height:17px;font-size:11.5px;letter-spacing:0.750px;color:#008000;">installiert</div>
<div class="t" style="left:304px;top:260.52px;line-height:17px;font-size:11.5px;letter-spacing:0.908px;color:#800000;">entfernen</div>
<div class="t" style="left:382px;top:260.52px;line-height:17px;font-size:11.5px;letter-spacing:0.667px;color:#000;">Kubuntu desktop system</div>
<div class="a" style="left:10px;top:278px;width:688px;height:16px;background:#dce3f7"></div>
<svg class="ic" style="left:13px;top:279px" width="13" height="15" viewBox="0 0 13 15"><defs><linearGradient id="ag" x1="0" y1="0" x2="1" y2="0.6"><stop offset="0" stop-color="#d6fdff"/><stop offset="0.55" stop-color="#5fb4fb"/><stop offset="1" stop-color="#1c6ff4"/></linearGradient></defs><path d="M0 0 L2.8 0 L12 6.3 L12 8.2 L2.8 14 L0 14 L0 10 L4.6 7.1 L0 4.2 Z" fill="#0d64f2"/><path d="M0.5 0.5 L2.7 0.5 L11.6 6.6 L11 7.3 L4.9 7.1 L0.5 4.0 Z" fill="url(#ag)" stroke="#0b3ec4" stroke-width="1" stroke-linejoin="miter"/></svg>
<div class="t" style="left:29px;top:277.52px;line-height:17px;font-size:11.5px;letter-spacing:0.979px;color:#000;">smb4k</div>
<div class="t" style="left:211px;top:277.52px;line-height:17px;font-size:11.5px;letter-spacing:0.750px;color:#008000;">installiert</div>
<div class="t" style="left:304px;top:277.52px;line-height:17px;font-size:11.5px;letter-spacing:0.908px;color:#800000;">entfernen</div>
<div class="t" style="left:382px;top:277.52px;line-height:17px;font-size:11.5px;letter-spacing:0.555px;color:#000;">A Samba (SMB) share advanced browser for KDE</div>
<svg class="ic" style="left:13px;top:296px" width="13" height="15" viewBox="0 0 13 15"><defs><linearGradient id="ag" x1="0" y1="0" x2="1" y2="0.6"><stop offset="0" stop-color="#d6fdff"/><stop offset="0.55" stop-color="#5fb4fb"/><stop offset="1" stop-color="#1c6ff4"/></linearGradient></defs><path d="M0 0 L2.8 0 L12 6.3 L12 8.2 L2.8 14 L0 14 L0 10 L4.6 7.1 L0 4.2 Z" fill="#0d64f2"/><path d="M0.5 0.5 L2.7 0.5 L11.6 6.6 L11 7.3 L4.9 7.1 L0.5 4.0 Z" fill="url(#ag)" stroke="#0b3ec4" stroke-width="1" stroke-linejoin="miter"/></svg>
<svg class="ic" style="left:191px;top:295px" width="16" height="16" viewBox="0 0 16 16"><path d="M5.41 7.18 A4.15 4.15 0 0 1 7.12 4.50" stroke="#98c8e8" stroke-width="2.3" fill="none"/><path d="M7.12 4.50 A4.15 4.15 0 0 1 11.05 4.05" stroke="#3c9ad4" stroke-width="2.3" fill="none"/><path d="M12.17 4.72 A4.15 4.15 0 0 1 13.63 7.54" stroke="#3c9ad4" stroke-width="2.3" fill="none"/><path d="M13.63 7.54 A4.15 4.15 0 0 1 12.17 11.08" stroke="#15328f" stroke-width="2.3" fill="none"/><path d="M10.92 11.80 A4.15 4.15 0 0 1 7.12 11.30" stroke="#15328f" stroke-width="2.3" fill="none"/><path d="M7.12 11.30 A4.15 4.15 0 0 1 5.41 8.62" stroke="#98c8e8" stroke-width="2.3" fill="none"/><ellipse cx="12.5" cy="2.1" rx="1.2" ry="1.6" fill="#ffffff" stroke="#2a4aa8" stroke-width="1.0"/><ellipse cx="2.3" cy="7.9" rx="1.2" ry="1.6" fill="#ffffff" stroke="#9ccbea" stroke-width="1.0"/><ellipse cx="12.5" cy="13.7" rx="1.2" ry="1.6" fill="#ffffff" stroke="#b2d6ee" stroke-width="1.0"/></svg>
<div class="t" style="left:29px;top:294.52px;line-height:17px;font-size:11.5px;letter-spacing:0.703px;color:#000;">strigi-applet</div>
<div class="t" style="left:211px;top:294.52px;line-height:17px;font-size:11.5px;letter-spacing:0.750px;color:#008000;">installiert</div>
<div class="t" style="left:304px;top:294.52px;line-height:17px;font-size:11.5px;letter-spacing:0.908px;color:#800000;">entfernen</div>
<div class="t" style="left:382px;top:294.52px;line-height:17px;font-size:11.5px;letter-spacing:0.505px;color:#000;">KDE applet for Strigi Desktop Search</div>
<div class="a" style="left:10px;top:312px;width:688px;height:18px;background:#dce3f7"></div>
<svg class="ic" style="left:13px;top:314px" width="13" height="15" viewBox="0 0 13 15"><defs><linearGradient id="ag" x1="0" y1="0" x2="1" y2="0.6"><stop offset="0" stop-color="#d6fdff"/><stop offset="0.55" stop-color="#5fb4fb"/><stop offset="1" stop-color="#1c6ff4"/></linearGradient></defs><path d="M0 0 L2.8 0 L12 6.3 L12 8.2 L2.8 14 L0 14 L0 10 L4.6 7.1 L0 4.2 Z" fill="#0d64f2"/><path d="M0.5 0.5 L2.7 0.5 L11.6 6.6 L11 7.3 L4.9 7.1 L0.5 4.0 Z" fill="url(#ag)" stroke="#0b3ec4" stroke-width="1" stroke-linejoin="miter"/></svg>
<svg class="ic" style="left:191px;top:313px" width="16" height="16" viewBox="0 0 16 16"><path d="M5.41 7.18 A4.15 4.15 0 0 1 7.12 4.50" stroke="#98c8e8" stroke-width="2.3" fill="none"/><path d="M7.12 4.50 A4.15 4.15 0 0 1 11.05 4.05" stroke="#3c9ad4" stroke-width="2.3" fill="none"/><path d="M12.17 4.72 A4.15 4.15 0 0 1 13.63 7.54" stroke="#3c9ad4" stroke-width="2.3" fill="none"/><path d="M13.63 7.54 A4.15 4.15 0 0 1 12.17 11.08" stroke="#15328f" stroke-width="2.3" fill="none"/><path d="M10.92 11.80 A4.15 4.15 0 0 1 7.12 11.30" stroke="#15328f" stroke-width="2.3" fill="none"/><path d="M7.12 11.30 A4.15 4.15 0 0 1 5.41 8.62" stroke="#98c8e8" stroke-width="2.3" fill="none"/><ellipse cx="12.5" cy="2.1" rx="1.2" ry="1.6" fill="#ffffff" stroke="#2a4aa8" stroke-width="1.0"/><ellipse cx="2.3" cy="7.9" rx="1.2" ry="1.6" fill="#ffffff" stroke="#9ccbea" stroke-width="1.0"/><ellipse cx="12.5" cy="13.7" rx="1.2" ry="1.6" fill="#ffffff" stroke="#b2d6ee" stroke-width="1.0"/></svg>
<div class="t" style="left:29px;top:312.52px;line-height:17px;font-size:11.5px;letter-spacing:0.830px;color:#000;">xserver-xorg-video-amd</div>
<div class="t" style="left:211px;top:312.52px;line-height:17px;font-size:11.5px;letter-spacing:0.734px;color:#808000;">aktualisierbar</div>
<div class="t" style="left:304px;top:312.52px;line-height:17px;font-size:11.5px;letter-spacing:0.691px;color:#808000;">aktualisieren</div>
<div class="t" style="left:382px;top:312.52px;line-height:17px;font-size:11.5px;letter-spacing:0.649px;color:#000;">AMD Geode GX/LX display driver (dummy transition...</div>
<svg class="ic" style="left:13px;top:332px" width="13" height="15" viewBox="0 0 13 15"><defs><linearGradient id="ag" x1="0" y1="0" x2="1" y2="0.6"><stop offset="0" stop-color="#d6fdff"/><stop offset="0.55" stop-color="#5fb4fb"/><stop offset="1" stop-color="#1c6ff4"/></linearGradient></defs><path d="M0 0 L2.8 0 L12 6.3 L12 8.2 L2.8 14 L0 14 L0 10 L4.6 7.1 L0 4.2 Z" fill="#0d64f2"/><path d="M0.5 0.5 L2.7 0.5 L11.6 6.6 L11 7.3 L4.9 7.1 L0.5 4.0 Z" fill="url(#ag)" stroke="#0b3ec4" stroke-width="1" stroke-linejoin="miter"/></svg>
<svg class="ic" style="left:191px;top:331px" width="16" height="16" viewBox="0 0 16 16"><path d="M5.41 7.18 A4.15 4.15 0 0 1 7.12 4.50" stroke="#98c8e8" stroke-width="2.3" fill="none"/><path d="M7.12 4.50 A4.15 4.15 0 0 1 11.05 4.05" stroke="#3c9ad4" stroke-width="2.3" fill="none"/><path d="M12.17 4.72 A4.15 4.15 0 0 1 13.63 7.54" stroke="#3c9ad4" stroke-width="2.3" fill="none"/><path d="M13.63 7.54 A4.15 4.15 0 0 1 12.17 11.08" stroke="#15328f" stroke-width="2.3" fill="none"/><path d="M10.92 11.80 A4.15 4.15 0 0 1 7.12 11.30" stroke="#15328f" stroke-width="2.3" fill="none"/><path d="M7.12 11.30 A4.15 4.15 0 0 1 5.41 8.62" stroke="#98c8e8" stroke-width="2.3" fill="none"/><ellipse cx="12.5" cy="2.1" rx="1.2" ry="1.6" fill="#ffffff" stroke="#2a4aa8" stroke-width="1.0"/><ellipse cx="2.3" cy="7.9" rx="1.2" ry="1.6" fill="#ffffff" stroke="#9ccbea" stroke-width="1.0"/><ellipse cx="12.5" cy="13.7" rx="1.2" ry="1.6" fill="#ffffff" stroke="#b2d6ee" stroke-width="1.0"/></svg>
<div class="t" style="left:29px;top:330.52px;line-height:17px;font-size:11.5px;letter-spacing:0.775px;color:#000;">xserver-xorg-video-geode</div>
<div class="t" style="left:211px;top:330.52px;line-height:17px;font-size:11.5px;letter-spacing:0.688px;color:#0000ff;">nicht installiert</div>
<div class="t" style="left:304px;top:330.52px;line-height:17px;font-size:11.5px;letter-spacing:0.717px;color:#008000;">installieren</div>
<div class="t" style="left:382px;top:330.52px;line-height:17px;font-size:11.5px;letter-spacing:0.636px;color:#000;">X.org server -- AMD Geode GX/LX display driver</div>
<div class="a" style="left:702px;top:312px;width:2px;height:62px;background:repeating-linear-gradient(180deg,#9c9ea6 0 1px,transparent 1px 3px)"></div>
<div class="a" style="left:314px;top:632px;width:155px;height:27px;border:1px solid #8c8c8c;border-radius:3px;background:linear-gradient(180deg,#fbfbfb 0%,#f1f1f1 45%,#dedede 50%,#e6e6e6 80%,#efefef 100%);box-shadow:inset 0 0 0 1px #fff"></div><div class="a" style="left:317px;top:635px;width:149px;height:21px;border:1px dotted #000"></div><div class="t" style="left:326px;top:636.52px;line-height:17px;font-size:11.5px;letter-spacing:0.718px;color:#000;"><u>Ä</u>nderungen anwenden</div>
<div class="a" style="left:471px;top:632px;width:233px;height:27px;border:1px solid #8c8c8c;border-radius:3px;background:linear-gradient(180deg,#fbfbfb 0%,#f1f1f1 45%,#dedede 50%,#e6e6e6 80%,#efefef 100%);box-shadow:inset 0 0 0 1px #fff"></div><div class="t" style="left:483px;top:636.52px;line-height:17px;font-size:11.5px;letter-spacing:0.747px;color:#000;">Änderungen <u>v</u>erwerfen und beenden</div>
<div class="t" style="left:15px;top:664.19px;line-height:16px;font-size:11.0px;letter-spacing:0.090px;color:#000;">Installieren 1, Aktualisieren 4, Entfernen 7</div>
<div class="t" style="left:234px;top:664.19px;line-height:16px;font-size:11.0px;letter-spacing:0.134px;color:#000;">1257 installiert, 8 aktualisierbar, 24927 verfügbar</div>
<div class="t" style="left:490px;top:664.19px;line-height:16px;font-size:11.0px;letter-spacing:0.082px;color:#000;">Herunterladen: 5M, Installation: -14M</div>
<div class="a" style="left:707px;top:680px;width:1px;height:1px;background:#9a8a58"></div>
<div class="a" style="left:706px;top:683px;width:1px;height:1px;background:#9a8a58"></div>
<div class="a" style="left:703px;top:684px;width:1px;height:1px;background:#9a8a58"></div>
<div class="a" style="left:707px;top:341px;width:1px;height:1px;background:#9a8a58"></div>
<div class="a" style="left:707px;top:344px;width:1px;height:1px;background:#9a8a58"></div>
<div class="a" style="left:707px;top:347px;width:1px;height:1px;background:#9a8a58"></div>
</body></html>
